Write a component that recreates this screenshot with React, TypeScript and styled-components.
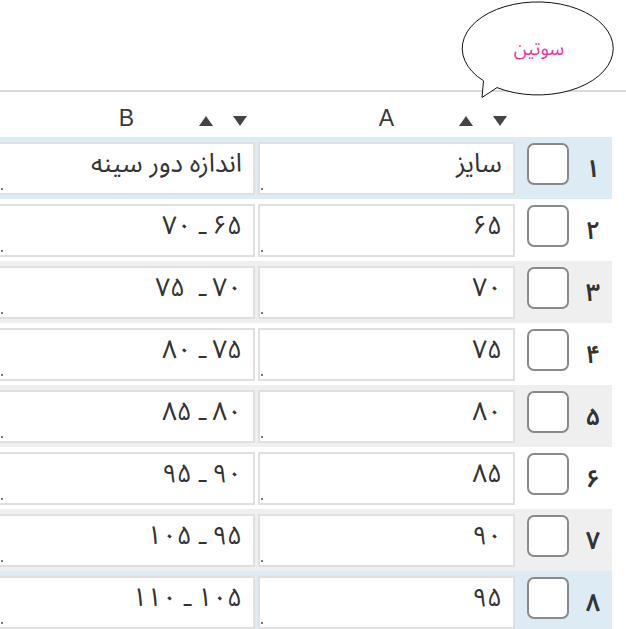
import React from 'react';
import styled, { createGlobalStyle, css } from 'styled-components';

const GlobalStyle = createGlobalStyle`
  html, body {
    margin: 0;
    padding: 0;
    background: #fff;
    overflow: hidden;
  }
  body {
    font-family: "Noto Sans Arabic", "Vazirmatn", "DejaVu Sans", sans-serif;
  }
`;

const Page = styled.div`
  width: 626px;
  height: 629px;
  overflow: hidden;
`;

const TopBar = styled.div`
  position: relative;
  height: 90px;
  border-bottom: 2px solid #d9d9d9;
`;

const Bubble = styled.div`
  position: absolute;
  left: 458px;
  top: 0;
  width: 158px;
  height: 100px;
  z-index: 2;
`;

const BubbleShape = styled.svg`
  display: block;
`;

const BubbleLabel = styled.span`
  position: absolute;
  left: 0;
  top: 0;
  width: 158px;
  height: 98px;
  display: flex;
  align-items: center;
  justify-content: center;
  padding-left: 2px;
  font-size: 19px;
  color: #e63a9c;
  direction: rtl;
`;

const Table = styled.div`
  direction: rtl;
  width: 612px;
  padding-right: 14px;
  overflow: hidden;
`;

const HeadRow = styled.div`
  display: flex;
  height: 45px;
  width: 614px;
`;

const HeadSpacer = styled.div`
  width: 97px;
  flex-shrink: 0;
`;

const HeadCell = styled.div<{ $gap?: boolean }>`
  width: 257px;
  flex-shrink: 0;
  direction: ltr;
  display: grid;
  grid-template-columns: 1fr auto 1fr;
  align-items: end;
  padding-bottom: 6px;
  box-sizing: border-box;
  ${p => p.$gap && css`margin-right: 3px;`}
`;

const HeadLabel = styled.span`
  grid-column: 2;
  font-family: "Liberation Sans", Arial, sans-serif;
  font-size: 23px;
  line-height: 26px;
  color: #3a3a3a;
`;

const SortArrows = styled.div`
  grid-column: 3;
  justify-self: end;
  display: flex;
  gap: 20px;
  margin-right: 8px;
  margin-bottom: 5px;
`;

const Row = styled.div<{ $tone: 'blue' | 'gray' | 'white' }>`
  display: flex;
  height: 62px;
  width: 614px;
  background: ${p =>
    p.$tone === 'blue' ? '#dcebf4' : p.$tone === 'gray' ? '#efefef' : '#fff'};
`;

const NumCell = styled.div`
  width: 38px;
  flex-shrink: 0;
  display: flex;
  align-items: center;
  justify-content: center;
  font-size: 25px;
  font-weight: 600;
  color: #333;
  padding-top: 2px;
  box-sizing: border-box;
`;

const CheckCell = styled.div`
  width: 59px;
  flex-shrink: 0;
  padding: 6px 5px 0 0;
  box-sizing: border-box;
`;

const CheckBox = styled.input`
  appearance: none;
  display: block;
  margin: 0;
  width: 42px;
  height: 42px;
  border: 2px solid #8a8a8a;
  border-radius: 7px;
  background: #fff;
  box-sizing: border-box;
`;

const Field = styled.textarea<{ $gap?: boolean }>`
  width: 257px;
  height: 53px;
  flex-shrink: 0;
  margin: 5px 0 0 0;
  ${p => p.$gap && css`margin-right: 3px;`}
  box-sizing: border-box;
  border: 2px solid #e0e0e0;
  border-radius: 0;
  padding: 2px 11px;
  font-family: "Noto Sans Arabic", "Vazirmatn", "DejaVu Sans", sans-serif;
  font-size: 26px;
  font-weight: 400;
  line-height: 36px;
  color: #333;
  background: #fff;
  overflow: hidden;
  resize: both;
  outline: none;

  &::-webkit-resizer {
    background: radial-gradient(circle at 2px 11px, #777 0.8px, transparent 1.2px);
  }
`;

const Up = () => (
  <svg width="14" height="10" viewBox="0 0 14 10">
    <polygon points="7,0 14,10 0,10" fill="#444" />
  </svg>
);

const Down = () => (
  <svg width="14" height="10" viewBox="0 0 14 10">
    <polygon points="0,0 14,0 7,10" fill="#444" />
  </svg>
);

type Tone = 'blue' | 'gray' | 'white';

const rows: { n: string; a: string; b: string; tone: Tone }[] = [
  { n: '۱', a: 'سایز', b: 'اندازه دور سینه', tone: 'blue' },
  { n: '۲', a: '۶۵', b: '۶۵ ـ ۷۰', tone: 'white' },
  { n: '۳', a: '۷۰', b: '۷۰ ـ  ۷۵', tone: 'gray' },
  { n: '۴', a: '۷۵', b: '۷۵ ـ ۸۰', tone: 'white' },
  { n: '۵', a: '۸۰', b: '۸۰ ـ ۸۵', tone: 'gray' },
  { n: '۶', a: '۸۵', b: '۹۰ ـ ۹۵', tone: 'white' },
  { n: '۷', a: '۹۰', b: '۹۵ ـ ۱۰۵', tone: 'gray' },
  { n: '۸', a: '۹۵', b: '۱۰۵ ـ ۱۱۰', tone: 'blue' },
];

export default function App() {
  return (
    <Page>
      <GlobalStyle />
      <TopBar>
        <Bubble>
          <BubbleShape width="158" height="100" viewBox="458 0 158 100">
            <path
              d="M483.5 80.8 L482 97.5 L497 87.6 A75.5 46.5 0 1 0 483.5 80.8 Z"
              fill="#fff"
              stroke="#111"
              strokeWidth="1"
            />
          </BubbleShape>
          <BubbleLabel>سوتین</BubbleLabel>
        </Bubble>
      </TopBar>
      <Table>
        <HeadRow>
          <HeadSpacer />
          <HeadCell>
            <HeadLabel>A</HeadLabel>
            <SortArrows>
              <Up />
              <Down />
            </SortArrows>
          </HeadCell>
          <HeadCell $gap>
            <HeadLabel>B</HeadLabel>
            <SortArrows>
              <Up />
              <Down />
            </SortArrows>
          </HeadCell>
        </HeadRow>
        {rows.map(r => (
          <Row key={r.n} $tone={r.tone}>
            <NumCell>{r.n}</NumCell>
            <CheckCell>
              <CheckBox type="checkbox" />
            </CheckCell>
            <Field dir="rtl" readOnly value={r.a} />
            <Field dir="rtl" $gap readOnly value={r.b} />
          </Row>
        ))}
      </Table>
    </Page>
  );
}
